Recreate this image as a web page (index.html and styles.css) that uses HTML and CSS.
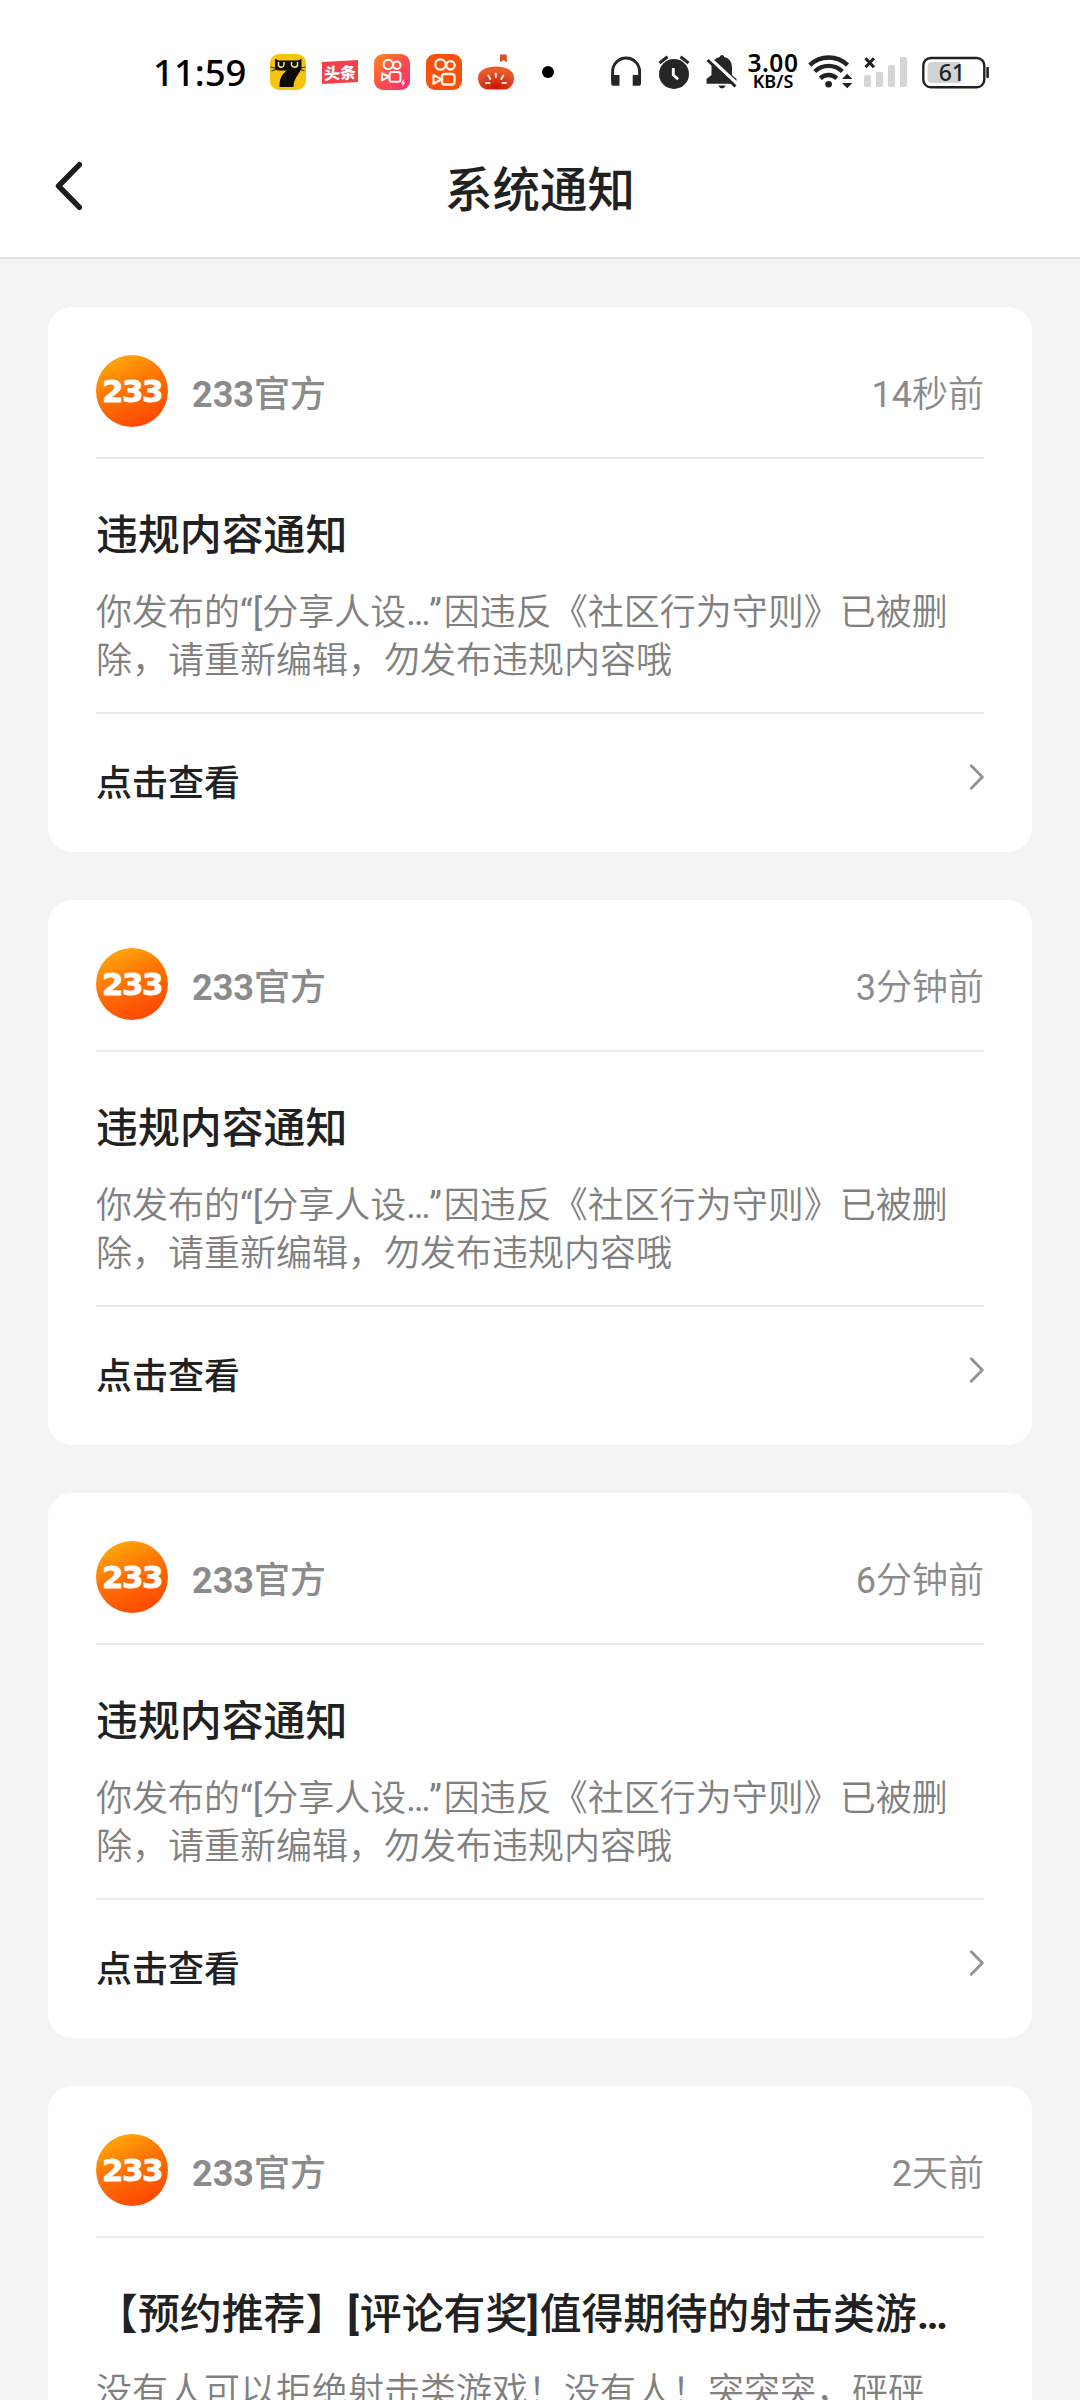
FILE: index.html
```html
<!DOCTYPE html>
<html lang="zh-CN">
<head>
<meta charset="utf-8">
<title>系统通知</title>
<link rel="stylesheet" href="styles.css">
</head>
<body>
<svg class="defs" width="0" height="0" aria-hidden="true">
  <defs>
    <linearGradient id="g-pink" x1="0" y1="0" x2="1" y2="1">
      <stop offset="0" stop-color="#ff8a1c"/><stop offset="0.5" stop-color="#fb5049"/><stop offset="1" stop-color="#fb2c77"/>
    </linearGradient>
    <radialGradient id="g-tomato" cx="0.5" cy="0.9" r="0.7">
      <stop offset="0" stop-color="#c81404"/><stop offset="1" stop-color="#ea5a2c"/>
    </radialGradient>
  </defs>
  <symbol id="chevron" viewBox="0 0 16 28">
    <path d="M2.3 2.8 13.3 14 2.3 25.2" fill="none" stroke="#949494" stroke-width="3" stroke-linecap="round" stroke-linejoin="round"/>
  </symbol>
</svg>

<header class="top">
  <div class="status">
    <span class="clock">11:59</span>
    <div class="apps">
      <svg width="36" height="36" viewBox="270 54 36 36">
        <rect x="270" y="54" width="36" height="36" rx="9" fill="#f6c50b"/>
        <path d="M275 58.800 279 60.500H298L301.500 58.800V68C299 75 293.500 78 293.500 87H279.500C279.500 78 281.500 75 286.500 70.500H278C275.500 70 275 68 275 66Z" fill="#0c0a05"/>
        <path d="M278.500 62V65.500C280 68 283.500 68 284 65V62M291.500 62V65C292.500 68 296 68 297.500 65.500V62" fill="none" stroke="#f8e88e" stroke-width="1.500"/>
        <path d="M270.500 67 277 68.500M271.500 71 277 69M299 68.500 305.500 67M299 69 304.500 71" stroke="#0c0a05" stroke-width=".9"/>
      </svg>
      <span class="toutiao"><b>头条</b></span>
      <svg width="36" height="36" viewBox="374 54.500 36 36">
        <rect x="374" y="54.500" width="36" height="36" rx="9" fill="url(#g-pink)"/>
        <g fill="none" stroke="#fff" stroke-width="2" stroke-linejoin="round">
          <circle cx="388.300" cy="65" r="4.700"/><circle cx="396.800" cy="65.700" r="3.700"/>
          <rect x="389.500" y="72.500" width="11" height="9.800" rx="2.500"/><path d="M382 73.800 389 77.200 382 80.800Z"/>
        </g>
        <path d="M403.500 80 400.800 84H403L402 87.500 405.200 83H403.200L404.500 80Z" fill="#fff"/>
      </svg>
      <svg width="36" height="36" viewBox="426 54.500 36 36">
        <rect x="426" y="54.500" width="36" height="36" rx="9" fill="#f9500b"/>
        <g fill="none" stroke="#fff3e6" stroke-width="2.300" stroke-linejoin="round">
          <circle cx="440.500" cy="65" r="5.200"/><circle cx="450.500" cy="65.800" r="4.200"/>
          <rect x="442" y="74.500" width="12.500" height="10.500" rx="2.500"/><path d="M433.500 75.500 441.500 79.700 433.500 84.200Z"/>
        </g>
      </svg>
      <svg width="36" height="36" viewBox="478 54.500 36 36">
        <path d="M500 55H506.800V63L503.400 60.500 500 63Z" fill="#d5532b"/>
        <path d="M478 78C478 70.500 487 67 496 67S514 70.500 514 78C514 85 510 90 504 90H488C482 90 478 85 478 78Z" fill="url(#g-tomato)"/>
        <path d="M495.800 74V77.500M488.300 76 490.300 79.500M503.300 76 501.300 79.500M486 83.500H489.500M502.500 83.500H506" stroke="#fff1da" stroke-width="2" stroke-linecap="round"/>
      </svg>
    </div>
    <svg class="dot" width="12" height="12" viewBox="0 0 12 12"><circle cx="6" cy="6" r="6"/></svg>
    <div class="sys">
      <svg width="32" height="36" viewBox="610 54 32 36">
        <path d="M612.600 80V71.500A13.400 13.400 0 0 1 639.600 71.500V80" fill="none" stroke="#262626" stroke-width="2.900"/>
        <path d="M611.200 75H619.500V85.800H613.800Q611.200 85.800 611.200 83.200ZM641 75H632.700V85.800H638.400Q641 85.800 641 83.200Z" fill="#262626"/>
      </svg>
      <svg width="32" height="36" viewBox="658 54 32 36">
        <circle cx="674" cy="74" r="15" fill="#262626"/>
        <path d="M659.500 63 667.500 56.800M688.500 63 680.500 56.800" stroke="#262626" stroke-width="3"/>
        <path d="M673.300 68V75L678 79.300" fill="none" stroke="#fff" stroke-width="2.800"/>
      </svg>
      <svg width="32" height="36" viewBox="706 54 32 36">
        <path d="M722 55C723.500 55 724 56 724.200 57C729 58 732 62 732 67V75L736.500 79V83.800H706.500V79L711.500 75V67C711.500 62 715 58 719.800 57C720 56 720.500 55 722 55ZM718.500 85.500H725.500C725 87.500 723.500 88.300 722 88.300S719 87.500 718.500 85.500Z" fill="#262626"/>
        <path d="M709.500 58 739 85.500" stroke="#fff" stroke-width="3.400"/>
        <path d="M707.500 60 735.500 86.500" stroke="#262626" stroke-width="3"/>
      </svg>
    </div>
    <div class="speed"><span class="rate">3.00</span><span class="unit">KB/S</span></div>
    <svg class="wifi" width="46" height="36" viewBox="808 54 46 36">
      <g fill="none" stroke="#222" stroke-width="4.400">
        <path d="M809.800 65.200A27 27 0 0 1 847.500 65.200"/>
        <path d="M814.800 71.500A19.500 19.500 0 0 1 842.300 71.500"/>
        <path d="M820.300 78.300A12 12 0 0 1 836.800 78.300"/>
      </g>
      <circle cx="828.600" cy="84.200" r="3.300" fill="#222"/>
      <path d="M842 79 847.200 73.800 852.400 79ZM842 83 847.200 88.200 852.400 83Z" fill="#222"/>
    </svg>
    <svg class="signal" width="44" height="36" viewBox="864 54 44 36">
      <path d="M865.500 58.300 874 67.300M874 58.300 865.500 67.300" stroke="#222" stroke-width="3"/>
      <g fill="#d5d5d5"><rect x="864" y="75" width="7" height="12" rx="1.500"/><rect x="876" y="72" width="7" height="15" rx="1.500"/><rect x="888" y="65" width="7" height="22" rx="1.500"/><rect x="900" y="57" width="7" height="30" rx="1.500"/></g>
    </svg>
    <svg class="battery" width="68" height="36" viewBox="922 54 68 36">
      <rect x="923.300" y="58" width="61" height="29.200" rx="7.500" fill="#fff" stroke="#222" stroke-width="2.400"/>
      <path d="M960 62V83H932Q927.500 83 927.500 78.500V66.500Q927.500 62 932 62Z" fill="#d2d2d2"/>
      <rect x="986.300" y="67" width="2.600" height="11" rx=".8" fill="#222"/>
      <text class="level" x="952" y="80.700" text-anchor="middle">61</text>
    </svg>
  </div>
  <div class="nav">
    <svg class="back" width="28" height="50" viewBox="0 0 28 50"><path d="M25.500 3.700 4.500 25 25.500 46.300" fill="none" stroke="#1c1c1c" stroke-width="5.400" stroke-linecap="round" stroke-linejoin="round"/></svg>
    <h1>系统通知</h1>
  </div>
</header>

<main class="list">
  <article class="card">
    <div class="head"><div class="avatar"><b>233</b></div><span class="name"><b>233</b>官方</span><time><span class="lat">14</span>秒前</time></div>
    <div class="content"><h2>违规内容通知</h2><p>你发布的<span class="lat">“[</span>分享人设<span class="lat gap">…”</span>因违反《社区行为守则》已被删<br>除，请重新编辑，勿发布违规内容哦</p></div>
    <div class="more"><span>点击查看</span><svg class="chevron"><use href="#chevron"/></svg></div>
  </article>
  <article class="card">
    <div class="head"><div class="avatar"><b>233</b></div><span class="name"><b>233</b>官方</span><time><span class="lat">3</span>分钟前</time></div>
    <div class="content"><h2>违规内容通知</h2><p>你发布的<span class="lat">“[</span>分享人设<span class="lat gap">…”</span>因违反《社区行为守则》已被删<br>除，请重新编辑，勿发布违规内容哦</p></div>
    <div class="more"><span>点击查看</span><svg class="chevron"><use href="#chevron"/></svg></div>
  </article>
  <article class="card">
    <div class="head"><div class="avatar"><b>233</b></div><span class="name"><b>233</b>官方</span><time><span class="lat">6</span>分钟前</time></div>
    <div class="content"><h2>违规内容通知</h2><p>你发布的<span class="lat">“[</span>分享人设<span class="lat gap">…”</span>因违反《社区行为守则》已被删<br>除，请重新编辑，勿发布违规内容哦</p></div>
    <div class="more"><span>点击查看</span><svg class="chevron"><use href="#chevron"/></svg></div>
  </article>
  <article class="card">
    <div class="head"><div class="avatar"><b>233</b></div><span class="name"><b>233</b>官方</span><time><span class="lat">2</span>天前</time></div>
    <div class="content"><h2>【预约推荐】<b>[</b>评论有奖<b>]</b>值得期待的射击类游<b>…</b></h2><p>没有人可以拒绝射击类游戏！没有人！突突突，砰砰</p></div>
  </article>
</main>
</body>
</html>
```
FILE: styles.css
```css
* { box-sizing: border-box; margin: 0; padding: 0; }

body {
  width: 1080px;
  height: 2400px;
  overflow: hidden;
  display: flex;
  flex-direction: column;
  background: #f4f4f4;
  color: #212121;
  font-family: Roboto, "Noto Sans CJK SC", sans-serif;
  text-spacing-trim: space-all;
}

svg { display: block; flex: none; }
.defs { position: absolute; }

.top {
  flex: none;
  height: 259px;
  background: #fff;
  border-bottom: 2px solid #e2e2e2;
}

/* Status bar */
.status {
  height: 144px;
  padding-left: 153px;
  display: flex;
  align-items: center;
}
.clock {
  width: 117px;
  font: 500 36.5px/44px "Noto Sans", sans-serif;
  color: #000;
}
.apps { display: flex; align-items: center; gap: 16px; }
.toutiao {
  width: 36px;
  height: 22px;
  display: flex;
  align-items: center;
  justify-content: center;
  background: #f3404b;
  color: #fff;
  transform: skewY(-3deg);
}
.toutiao b { font: 900 16px/22px "Noto Sans CJK SC", sans-serif; }
.dot { margin-left: 28px; }
.sys { display: flex; gap: 16px; margin-left: 56px; }
.speed {
  width: 62px;
  margin-left: 4px;
  display: flex;
  flex-direction: column;
  align-items: center;
  color: #000;
  font-family: "Noto Sans", sans-serif;
}
.rate { font-size: 24.5px; line-height: 19px; font-weight: 600; letter-spacing: .6px; }
.unit { font-size: 18px; line-height: 19px; font-weight: 600; }
.wifi { margin-left: 4px; }
.signal { margin-left: 10px; }
.battery { margin-left: 14px; }
.level { font: 500 23px "Noto Sans", sans-serif; fill: #222; }

/* Title bar */
.nav {
  height: 94px;
  display: grid;
  grid-template-columns: 135px 1fr 135px;
  align-items: center;
}
.back { margin: 0 0 11px 54px; }
h1 {
  text-align: center;
  font-size: 47.5px;
  line-height: 60px;
  font-weight: 500;
}

/* Notification cards */
.list {
  flex: 1;
  min-height: 0;
  overflow: hidden;
  display: flex;
  flex-direction: column;
  gap: 48px;
  padding: 48px 48px 0;
}
.card {
  flex: none;
  height: 545px;
  padding: 48px 48px 0;
  border-radius: 24px;
  background: #fff;
}
.head {
  height: 104px;
  padding-bottom: 30px;
  display: flex;
  align-items: center;
  border-bottom: 2px solid #e8e8e8;
  font-size: 36px;
  line-height: 44px;
  color: #8b8b8b;
}
.avatar {
  width: 72px;
  height: 72px;
  display: flex;
  align-items: center;
  justify-content: center;
  border-radius: 50%;
  background: linear-gradient(155deg, #ffae0a 5%, #ff7404 45%, #ff4b00 85%);
  color: #fff;
}
.avatar b {
  font: bold 31px/36px "DejaVu Sans", sans-serif;
  letter-spacing: -1.5px;
  -webkit-text-stroke: .8px #fff;
}
.name { margin-left: 24px; padding-top: 7px; font-weight: 500; }
time { margin-left: auto; padding-top: 7px; font-weight: 350; }
.lat { font-weight: 400; }

.content { height: 255px; padding-top: 52px; border-bottom: 2px solid #e8e8e8; }
h2 {
  font-size: 41.9px;
  line-height: 50px;
  font-weight: 500;
  white-space: nowrap;
}
h2 b { letter-spacing: .8px; }
.content p {
  margin-top: 28px;
  font-size: 36px;
  line-height: 48px;
  font-weight: 350;
  color: #808080;
  white-space: nowrap;
}
.gap { letter-spacing: 1.7px; }

.more {
  height: 138px;
  padding-bottom: 6px;
  display: flex;
  align-items: center;
  justify-content: space-between;
  font-size: 36px;
  font-weight: 500;
}
.chevron { width: 16px; height: 28px; margin: 0 -1px 6px 0; }
```
